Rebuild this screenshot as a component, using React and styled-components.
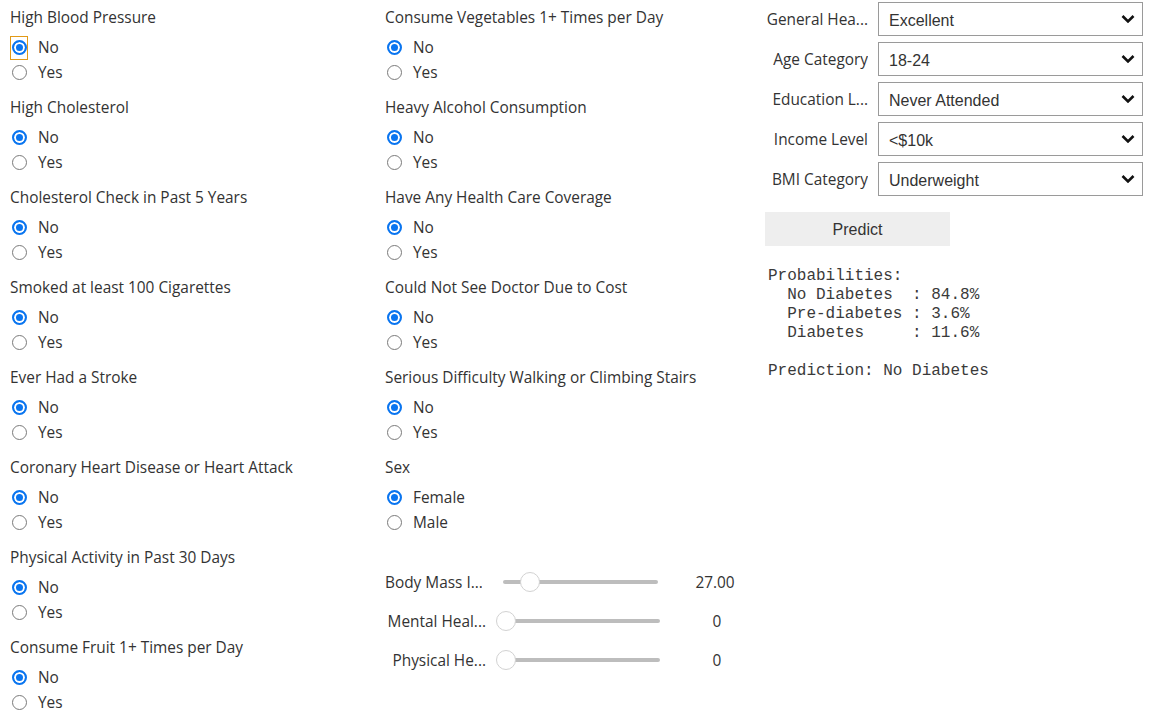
import React from "react";
import styled, { createGlobalStyle } from "styled-components";

const GlobalStyle = createGlobalStyle`
  html, body { margin: 0; padding: 0; background: #fff; }
  body { font-family: "Open Sans", "Noto Sans", sans-serif; color: #333; }
  * { box-sizing: border-box; }
`;

const Page = styled.div`
  display: flex;
  align-items: flex-start;
  width: 1152px;
  height: 717px;
  overflow: hidden;
  padding-left: 10px;
`;

const Column = styled.div`
  display: flex;
  flex-direction: column;
  width: ${(p) => p.$width}px;
  padding-top: ${(p) => p.$top}px;
`;

const Group = styled.div`
  display: flex;
  flex-direction: column;
  margin-bottom: 13px;
`;

const GroupTitle = styled.div`
  height: 20px;
  line-height: 20px;
  font-size: 15.4px;
  white-space: nowrap;
`;

const RadioList = styled.div`
  display: flex;
  flex-direction: column;
  margin-top: 7px;
`;

const RadioItem = styled.label`
  display: flex;
  align-items: center;
  height: 25px;
  font-size: 15.4px;
  cursor: pointer;
`;

const RadioBox = styled.span`
  display: inline-flex;
  align-items: center;
  justify-content: center;
  width: 18px;
  height: 24px;
  border: 1px solid ${(p) => (p.$focused ? "#e29a17" : "transparent")};
`;

const RadioInput = styled.input.attrs({ type: "radio" })`
  appearance: none;
  margin: 0;
  width: 15px;
  height: 15px;
  border-radius: 50%;
  border: 1.5px solid #7a7a7a;
  background: #fff;
  outline: none;
  &:checked {
    border: 2px solid #0a75f0;
    background: #0a75f0;
    box-shadow: inset 0 0 0 2px #fff;
  }
`;

const RadioText = styled.span`
  margin-left: 10px;
`;

const SliderSection = styled.div`
  display: flex;
  flex-direction: column;
  gap: 5px;
  margin-top: 17px;
`;

const SliderRow = styled.div`
  display: flex;
  align-items: center;
  height: 34px;
  font-size: 15.4px;
`;

const SliderLabel = styled.div`
  width: ${(p) => p.$width}px;
  text-align: right;
  white-space: nowrap;
  overflow: hidden;
`;

const Track = styled.div`
  position: relative;
  margin-left: ${(p) => p.$gap}px;
  width: ${(p) => p.$width}px;
  height: 4px;
  border-radius: 2px;
  background: #bdbdbd;
`;

const Thumb = styled.div`
  position: absolute;
  top: 50%;
  width: 20px;
  height: 20px;
  margin-left: -10px;
  transform: translateY(-50%);
  border-radius: 50%;
  background: #fff;
  border: 1px solid #d2d2d2;
`;

const Readout = styled.div`
  margin-left: 17px;
  width: 80px;
  text-align: center;
`;

const DropRow = styled.div`
  display: flex;
  align-items: center;
  height: 34px;
  margin-bottom: 6px;
`;

const DropLabel = styled.div`
  width: 103px;
  margin-right: 10px;
  text-align: right;
  white-space: nowrap;
  overflow: hidden;
  font-size: 15.4px;
`;

const SelectWrap = styled.div`
  position: relative;
  width: 265px;
  height: 34px;
`;

const Select = styled.select`
  appearance: none;
  width: 100%;
  height: 100%;
  border: 1px solid #9a9a9a;
  border-radius: 0;
  background: #fff;
  padding: 2px 0 0 10px;
  font-family: "Liberation Sans", Arial, sans-serif;
  font-size: 16px;
  color: #333;
  outline: none;
`;

const Chevron = styled.svg`
  position: absolute;
  right: 8px;
  top: 50%;
  transform: translateY(-50%);
  pointer-events: none;
`;

const PredictButton = styled.button`
  margin-top: 10px;
  width: 185px;
  height: 34px;
  padding-top: 2px;
  border: none;
  background: #eeeeee;
  font-family: "Liberation Sans", Arial, sans-serif;
  font-size: 16px;
  color: #333;
`;

const Output = styled.pre`
  margin: 21px 0 0 3px;
  font-family: "Liberation Mono", "Courier New", monospace;
  font-size: 16px;
  line-height: 19px;
  color: #3a3a3a;
`;

const col1 = [
  "High Blood Pressure",
  "High Cholesterol",
  "Cholesterol Check in Past 5 Years",
  "Smoked at least 100 Cigarettes",
  "Ever Had a Stroke",
  "Coronary Heart Disease or Heart Attack",
  "Physical Activity in Past 30 Days",
  "Consume Fruit 1+ Times per Day",
];

const col2 = [
  "Consume Vegetables 1+ Times per Day",
  "Heavy Alcohol Consumption",
  "Have Any Health Care Coverage",
  "Could Not See Doctor Due to Cost",
  "Serious Difficulty Walking or Climbing Stairs",
];

const dropdowns = [
  ["General Hea...", "Excellent"],
  ["Age Category", "18-24"],
  ["Education L...", "Never Attended"],
  ["Income Level", "<$10k"],
  ["BMI Category", "Underweight"],
];

const sliders = [
  { label: "Body Mass I...", value: "27.00", frac: 0.172, labelW: 97, gap: 21, trackW: 155 },
  { label: "Mental Heal...", value: "0", frac: 0, labelW: 101, gap: 20, trackW: 154 },
  { label: "Physical He...", value: "0", frac: 0, labelW: 101, gap: 20, trackW: 154 },
];

function RadioGroup({ title, options = ["No", "Yes"], focused }) {
  return (
    <Group>
      <GroupTitle>{title}</GroupTitle>
      <RadioList>
        {options.map((o, i) => (
          <RadioItem key={o}>
            <RadioBox $focused={focused && i === 0}>
              <RadioInput name={title} defaultChecked={i === 0} />
            </RadioBox>
            <RadioText>{o}</RadioText>
          </RadioItem>
        ))}
      </RadioList>
    </Group>
  );
}

export default function App() {
  return (
    <>
      <GlobalStyle />
      <Page>
        <Column $width={375} $top={8}>
          {col1.map((t, i) => (
            <RadioGroup key={t} title={t} focused={i === 0} />
          ))}
        </Column>
        <Column $width={380} $top={8}>
          {col2.map((t) => (
            <RadioGroup key={t} title={t} />
          ))}
          <RadioGroup title="Sex" options={["Female", "Male"]} />
          <SliderSection>
            {sliders.map((s) => (
              <SliderRow key={s.label}>
                <SliderLabel $width={s.labelW}>{s.label}</SliderLabel>
                <Track $gap={s.gap} $width={s.trackW}>
                  <Thumb style={{ left: `${s.frac * 100}%` }} />
                </Track>
                <Readout>{s.value}</Readout>
              </SliderRow>
            ))}
          </SliderSection>
        </Column>
        <Column $width={378} $top={2}>
          {dropdowns.map(([label, value]) => (
            <DropRow key={label}>
              <DropLabel>{label}</DropLabel>
              <SelectWrap>
                <Select defaultValue={value}>
                  <option>{value}</option>
                </Select>
                <Chevron width="14" height="9" viewBox="0 0 14 9">
                  <path d="M1.5 1.5 L7 7 L12.5 1.5" fill="none" stroke="#111" strokeWidth="2.6" />
                </Chevron>
              </SelectWrap>
            </DropRow>
          ))}
          <PredictButton>Predict</PredictButton>
          <Output>{`Probabilities:
  No Diabetes  : 84.8%
  Pre-diabetes : 3.6%
  Diabetes     : 11.6%

Prediction: No Diabetes`}</Output>
        </Column>
      </Page>
    </>
  );
}
